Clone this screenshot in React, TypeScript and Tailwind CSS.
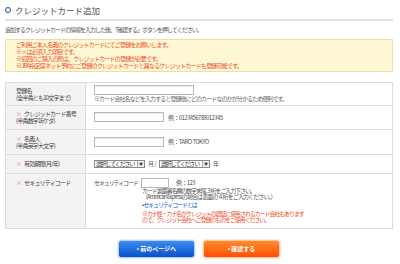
import type { ReactNode } from "react";

function Req() {
  return <span className="mr-[2px] text-[6px] tracking-normal text-[#f07a7a]">×</span>;
}

function Row({ label, sub, req, h, children, top }: { label: string; sub?: string; req?: boolean; h: string; children: ReactNode; top?: boolean }) {
  return (
    <div className={`flex border-t border-[#dcdcdc] first:border-t-0 ${h}`}>
      <div className={`flex w-[80px] shrink-0 flex-col border-r border-[#dcdcdc] bg-[#f3f3f3] pl-[10px] text-[6px] leading-[7px] tracking-[-0.8px] text-[#444] ${top ? "pt-[5px]" : "justify-center"}`}>
        <div>
          {req && <Req />}
          {label}
        </div>
        {sub && <div>{sub}</div>}
      </div>
      <div className={`flex flex-1 flex-col pl-[8px] ${top ? "pt-[4px]" : "justify-center"}`}>{children}</div>
    </div>
  );
}

function Input({ w }: { w: string }) {
  return <div className={`h-[10px] ${w} shrink-0 border border-[#b9b9b9] bg-white shadow-[inset_0_1px_1px_rgba(0,0,0,0.08)]`} />;
}

function Select() {
  return (
    <div className="flex h-[8px] w-[51px] shrink-0 items-center border border-[#8a8a8a] bg-white pl-[1px] text-[6px] leading-[6px] tracking-[-1.2px] text-[#333]">
      <span className="flex-1 whitespace-nowrap">選択してください</span>
      <span className="flex h-full w-[7px] shrink-0 items-center justify-center border-l border-[#aaa] bg-[#eee] text-[4px] tracking-normal">▼</span>
    </div>
  );
}

export default function App() {
  return (
    <div className="h-[264px] w-[400px] overflow-hidden bg-white font-['Noto_Sans_CJK_JP',sans-serif]">
      <div className="ml-[5px] w-[388px] pt-[4px]">
        <div className="flex items-center gap-[4px]">
          <span className="h-[6px] w-[6px] rounded-full border-[1.5px] border-[#1c4f9e]" />
          <span className="text-[8.5px] leading-[12px] text-[#555]">クレジットカード追加</span>
        </div>
        <div className="mt-[3px] h-[1.5px] bg-[#e2e2e2]" />
        <p className="mt-[5px] text-[6px] leading-[7px] tracking-[-1px] text-[#555]">
          追加するクレジットカードの情報を入力した後、「確認する」ボタンを押してください。
        </p>

        <div className="mt-[6px] border border-[#e9dfad] bg-[#fdf8d3] px-[10px] py-[1px] text-[6px] leading-[7.3px] tracking-[-0.8px] text-[#f04e2a]">
          <div>ご利用ご本人名義のクレジットカードにてご登録をお願いします。</div>
          <div>※×は必須入力項目です。</div>
          <div>※初回のご購入の際は、クレジットカードの登録が必要です。</div>
          <div>※JRA指定席ネット予約にご登録のクレジットカードと異なるクレジットカードも登録可能です。</div>
        </div>

        <div className="mt-[10px] border border-[#dcdcdc] text-[6px] leading-[7px] tracking-[-0.6px] text-[#555]">
          <Row label="登録名" sub="(全半角とも10文字まで)" h="h-[22px]">
            <Input w="w-[100px]" />
            <div className="mt-[1px] leading-[6px] tracking-[-0.9px] text-[#666]">
              ※カード会社名などを入力すると登録後にどのカードなのかが分かるため便利です。
            </div>
          </Row>
          <Row label="クレジットカード番号" sub="(半角数字16ケタ)" req h="h-[24px]">
            <div className="flex items-center gap-[4px]">
              <Input w="w-[70px]" />
              <span>例：0123456789012345</span>
            </div>
          </Row>
          <Row label="名義人" sub="(半角英字大文字)" req h="h-[25px]">
            <div className="flex items-center gap-[4px]">
              <Input w="w-[70px]" />
              <span>例：TARO TOKYO</span>
            </div>
          </Row>
          <Row label="有効期限(月/年)" req h="h-[19px]">
            <div className="flex items-center gap-[3px]">
              <Select />
              <span>月 /</span>
              <Select />
              <span>年</span>
            </div>
          </Row>
          <Row label="セキュリティコード" req h="h-[55px]" top>
            <div className="flex items-center">
              <span className="w-[47px] tracking-[-1.1px]">セキュリティコード</span>
              <div className="h-[10px] w-[28px] border border-[#b9b9b9] bg-white" />
              <span className="ml-[7px]">例：123</span>
            </div>
            <div className="ml-[48px] leading-[6px] tracking-[-1.1px] text-[#555]">
              <div>カード裏面署名欄の数字末尾３桁をご入力下さい。</div>
              <div className="tracking-[-0.9px]">（American Expressの場合は表面の４桁をご入力ください。）</div>
              <div className="mt-[2px] text-[#1a5fc8]">
                <span className="text-[#333]">• </span>セキュリティコードとは
              </div>
              <div className="mt-[3px] text-[#f04e2a]">
                <div>※カナ姓・カナ名がクレジットの認証に使用されるカード会社もあります</div>
                <div>ので、クレジット会社へご登録のものをご使用ください。</div>
              </div>
            </div>
          </Row>
        </div>

        <div className="mt-[11px] flex justify-center gap-[8px]">
          <button className="h-[18px] w-[77px] rounded-[3px] border border-[#b9d2f2] bg-gradient-to-b from-[#3d8cf0] to-[#0a4fca] text-[6px] font-bold text-white shadow-[0_0_0_1px_#e3eefb]">
            • 前のページへ
          </button>
          <button className="h-[18px] w-[77px] rounded-[3px] border border-[#f8c9a5] bg-gradient-to-b from-[#ff8a2a] to-[#ff4d00] text-[6px] font-bold text-white shadow-[0_0_0_1px_#fde9da]">
            • 確認する
          </button>
        </div>
      </div>
    </div>
  );
}
